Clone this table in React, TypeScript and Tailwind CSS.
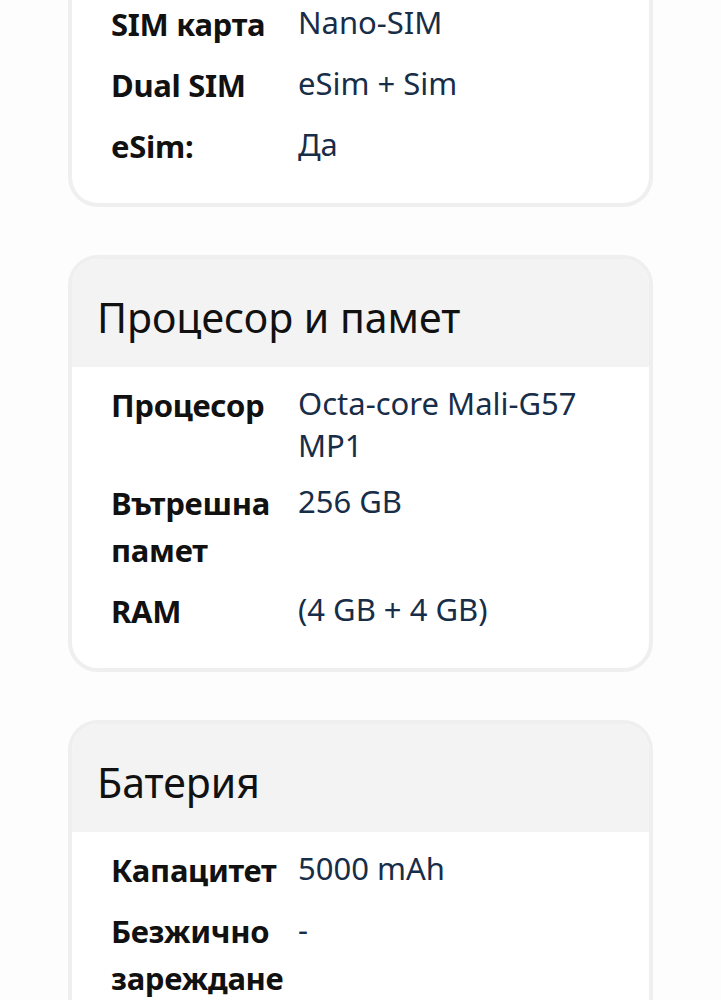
import React from "react"

type Spec = { label: string; value: string }

const sim: Spec[] = [
  { label: "SIM карта", value: "Nano-SIM" },
  { label: "Dual SIM", value: "eSim + Sim" },
  { label: "eSim:", value: "Да" },
]

const cpu: Spec[] = [
  { label: "Процесор", value: "Octa-core Mali-G57 MP1" },
  { label: "Вътрешна памет", value: "256 GB" },
  { label: "RAM", value: "(4 GB + 4 GB)" },
]

const battery: Spec[] = [
  { label: "Капацитет", value: "5000 mAh" },
  { label: "Безжично зареждане", value: "-" },
]

function Rows({ items }: { items: Spec[] }) {
  return (
    <div className="pl-[39px] pr-[36px]">
      {items.map((s) => (
        <div key={s.label} className="flex items-start py-[7px]">
          <div className="w-[187px] shrink-0 text-[31px] leading-[47px] font-bold text-[#111111] tracking-[-0.3px]">
            {s.label}
          </div>
          <div className="flex-1 min-w-0 text-[31px] leading-[42px] text-[#172d48]">{s.value}</div>
        </div>
      ))}
    </div>
  )
}

function Card({ title, items, className = "" }: { title?: string; items: Spec[]; className?: string }) {
  return (
    <div className={`rounded-[30px] border-4 border-[#efefef] bg-white overflow-hidden ${className}`}>
      {title && (
        <div className="h-[108px] bg-[#f3f3f3] pl-[25px] pt-[38px]">
          <h2 className="text-[41px] leading-none font-normal text-[#111111]">{title}</h2>
        </div>
      )}
      <div className={`${title ? "pt-2" : "pt-[11px]"} pb-[26px]`}>
        <Rows items={items} />
      </div>
    </div>
  )
}

export default function App() {
  return (
    <div
      lang="bg"
      className="min-h-[1000px] bg-[#fdfdfd] px-[68px] pb-12 overflow-hidden"
      style={{ fontFamily: '"Noto Sans", "Open Sans", sans-serif' }}
    >
      <div className="flex flex-col gap-12">
        <Card items={sim} className="-mt-[17px] rounded-t-none border-t-0" />
        <Card title="Процесор и памет" items={cpu} />
        <Card title="Батерия" items={battery} />
      </div>
    </div>
  )
}
